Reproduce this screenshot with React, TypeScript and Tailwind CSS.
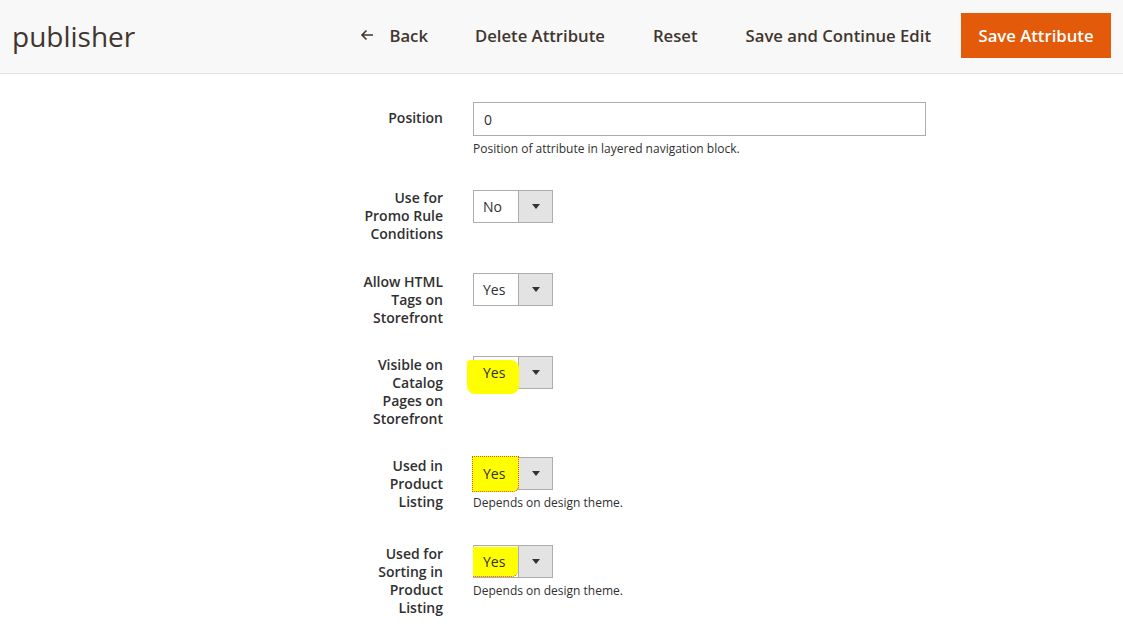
import React from "react"

const font = { fontFamily: '"Open Sans", "Liberation Sans", sans-serif' }

interface SelectProps {
  value: string
  mark?: "a" | "b" | "c"
}

function Select({ value, mark }: SelectProps) {
  return (
    <div className="relative flex h-[33px] w-[80px] border border-[#adadad] bg-white">
      {mark === "a" && (
        <div className="absolute left-[-7px] top-[3px] h-[34px] w-[52px] rounded-[8px] rounded-tl-[3px] bg-[#ffff00]" />
      )}
      {mark === "b" && (
        <div className="absolute left-[-2px] top-[-2px] h-[36px] w-[47px] rounded-br-[6px] bg-[#ffff00] border border-dotted border-[#e0502a]" />
      )}
      {mark === "c" && (
        <div className="absolute left-[-1px] top-[1px] h-[30px] w-[45px] rounded-br-[6px] bg-[#ffff00] border-b border-dotted border-[#e0502a]" />
      )}
      <div className="relative flex w-[44px] items-center pl-[9px] text-[14px] text-[#303030]">{value}</div>
      <div className="flex flex-1 items-center justify-center border-l border-[#adadad] bg-[#e3e3e3]">
        <svg width="8" height="5" viewBox="0 0 8 5">
          <path d="M0 0h8L4 5z" fill="#333" />
        </svg>
      </div>
    </div>
  )
}

interface RowProps {
  label: string[]
  children: React.ReactNode
  className?: string
  labelClass?: string
}

function Row({ label, children, className = "", labelClass = "" }: RowProps) {
  return (
    <div className={`flex ${className}`}>
      <div className={`w-[443px] text-right text-[14px] font-semibold leading-[18px] text-[#303030] ${labelClass}`}>
        {label.map((l, i) => (
          <div key={i}>{l}</div>
        ))}
      </div>
      <div className="ml-[30px]">{children}</div>
    </div>
  )
}

function Note({ text }: { text: string }) {
  return <div className="mt-[5px] text-[12px] leading-[16px] text-[#303030]">{text}</div>
}

export default function App() {
  return (
    <div className="min-h-[641px] w-[1123px] overflow-hidden bg-white" style={font}>
      <header className="flex h-[74px] items-center border-b border-[#e3e3e3] bg-[#f8f8f8] pb-[2px] pl-[12px] pr-[12px]">
        <h1 className="text-[28px] leading-none text-[#41362f]">publisher</h1>
        <div className="ml-auto flex items-center text-[16.7px] font-semibold text-[#41362f]">
          <button className="flex items-center px-[23px]">
            <svg width="14" height="12" viewBox="0 0 14 12" className="mr-[15px]">
              <path d="M13 6H2M6.5 1.5 2 6l4.5 4.5" fill="none" stroke="#41362f" strokeWidth="1.6" />
            </svg>
            Back
          </button>
          <button className="px-[24px]">Delete Attribute</button>
          <button className="px-[24px]">Reset</button>
          <button className="px-[24px]">Save and Continue Edit</button>
          <button className="ml-[6px] h-[45px] w-[150px] bg-[#e35a0a] text-white">Save Attribute</button>
        </div>
      </header>

      <main className="pt-[28px]">
        <Row label={["Position"]} labelClass="pt-[7px]">
          <div className="flex h-[34px] w-[453px] items-center border border-[#adadad] pl-[10px] text-[14px] text-[#303030]">0</div>
          <div className="mt-[5px] text-[12px] leading-[16px] text-[#303030]">Position of attribute in layered navigation block.</div>
        </Row>

        <Row label={["Use for", "Promo Rule", "Conditions"]} className="mt-[32px]">
          <div className="mt-[1px]">
            <Select value="No" />
          </div>
        </Row>

        <Row label={["Allow HTML", "Tags on", "Storefront"]} className="mt-[30px]">
          <Select value="Yes" />
        </Row>

        <Row label={["Visible on", "Catalog", "Pages on", "Storefront"]} className="mt-[29px]">
          <Select value="Yes" mark="a" />
        </Row>

        <Row label={["Used in", "Product", "Listing"]} className="mt-[29px]">
          <Select value="Yes" mark="b" />
          <Note text="Depends on design theme." />
        </Row>

        <Row label={["Used for", "Sorting in", "Product", "Listing"]} className="mt-[34px]">
          <Select value="Yes" mark="c" />
          <Note text="Depends on design theme." />
        </Row>
      </main>
    </div>
  )
}
